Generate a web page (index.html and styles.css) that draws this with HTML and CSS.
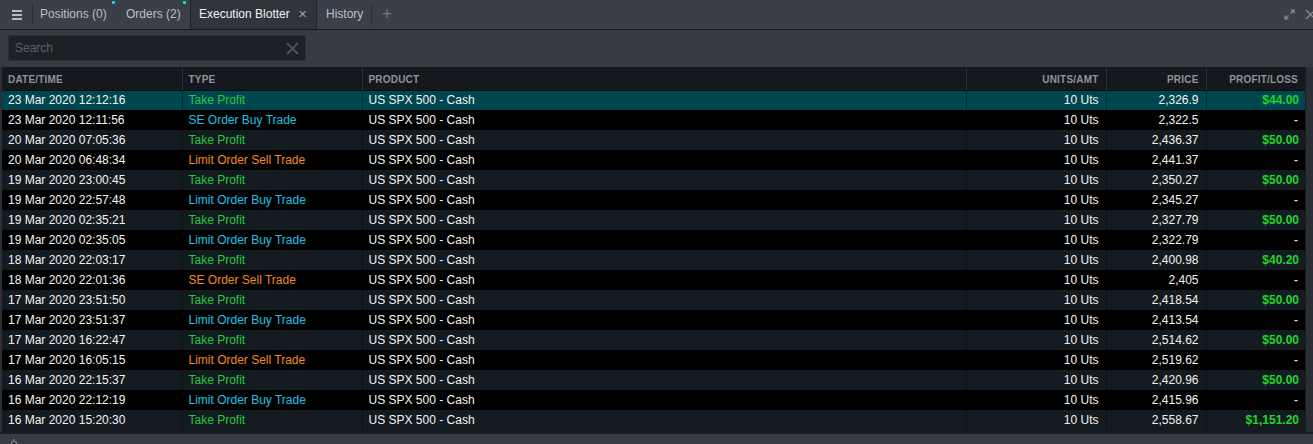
FILE: index.html
```html
<!DOCTYPE html>
<html>
<head>
<meta charset="utf-8">
<link rel="stylesheet" href="styles.css">
</head>
<body>
<div class="app">
  <div class="tabbar">
    <div class="menu">
      <span class="bar"></span><span class="bar"></span><span class="bar"></span>
    </div>
    <div class="tab tab-pos">Positions (0)<span class="mark mark-cyan"></span></div>
    <div class="tab tab-ord">Orders (2)<span class="mark mark-green"></span></div>
    <div class="tab active">Execution Blotter<span class="close">&#x2715;</span></div>
    <div class="tab tab-hist">History</div>
    <div class="add">+</div>
    <div class="spacer"></div>
    <div class="win-icons">
      <svg class="expand" width="11" height="11" viewBox="0 0 11 11">
        <path d="M6.5 1H10V4.5M10 1L6.5 4.5M4.5 10H1V6.5M1 10L4.5 6.5" fill="none" stroke="#8a9098" stroke-width="1.2"/>
      </svg>
      <svg class="xclose" width="11" height="11" viewBox="0 0 11 11">
        <path d="M1 1L10 10M10 1L1 10" fill="none" stroke="#8a9098" stroke-width="1.2"/>
      </svg>
    </div>
  </div>
  <div class="toolbar">
    <div class="search">
      <span class="placeholder">Search</span>
      <svg width="13" height="13" viewBox="0 0 13 13"><path d="M1 1L12 12M12 1L1 12" stroke="#4b5057" stroke-width="2" fill="none"/></svg>
    </div>
  </div>
  <div class="grid-wrap">
    <div class="grid">
      <table>
        <colgroup>
          <col class="c-date"><col class="c-type"><col class="c-prod"><col class="c-units"><col class="c-price"><col class="c-pl">
        </colgroup>
        <thead>
          <tr><th>DATE/TIME</th><th>TYPE</th><th>PRODUCT</th><th class="r">UNITS/AMT</th><th class="r">PRICE</th><th class="r">PROFIT/LOSS</th></tr>
        </thead>
        <tbody>
          <tr class="sel"><td>23 Mar 2020 12:12:16</td><td class="tp">Take Profit</td><td>US SPX 500 - Cash</td><td class="r">10 Uts</td><td class="r">2,326.9</td><td class="r pl">$44.00</td></tr>
          <tr><td>23 Mar 2020 12:11:56</td><td class="buy">SE Order Buy Trade</td><td>US SPX 500 - Cash</td><td class="r">10 Uts</td><td class="r">2,322.5</td><td class="r">-</td></tr>
          <tr><td>20 Mar 2020 07:05:36</td><td class="tp">Take Profit</td><td>US SPX 500 - Cash</td><td class="r">10 Uts</td><td class="r">2,436.37</td><td class="r pl">$50.00</td></tr>
          <tr><td>20 Mar 2020 06:48:34</td><td class="sell">Limit Order Sell Trade</td><td>US SPX 500 - Cash</td><td class="r">10 Uts</td><td class="r">2,441.37</td><td class="r">-</td></tr>
          <tr><td>19 Mar 2020 23:00:45</td><td class="tp">Take Profit</td><td>US SPX 500 - Cash</td><td class="r">10 Uts</td><td class="r">2,350.27</td><td class="r pl">$50.00</td></tr>
          <tr><td>19 Mar 2020 22:57:48</td><td class="buy">Limit Order Buy Trade</td><td>US SPX 500 - Cash</td><td class="r">10 Uts</td><td class="r">2,345.27</td><td class="r">-</td></tr>
          <tr><td>19 Mar 2020 02:35:21</td><td class="tp">Take Profit</td><td>US SPX 500 - Cash</td><td class="r">10 Uts</td><td class="r">2,327.79</td><td class="r pl">$50.00</td></tr>
          <tr><td>19 Mar 2020 02:35:05</td><td class="buy">Limit Order Buy Trade</td><td>US SPX 500 - Cash</td><td class="r">10 Uts</td><td class="r">2,322.79</td><td class="r">-</td></tr>
          <tr><td>18 Mar 2020 22:03:17</td><td class="tp">Take Profit</td><td>US SPX 500 - Cash</td><td class="r">10 Uts</td><td class="r">2,400.98</td><td class="r pl">$40.20</td></tr>
          <tr><td>18 Mar 2020 22:01:36</td><td class="sell">SE Order Sell Trade</td><td>US SPX 500 - Cash</td><td class="r">10 Uts</td><td class="r">2,405</td><td class="r">-</td></tr>
          <tr><td>17 Mar 2020 23:51:50</td><td class="tp">Take Profit</td><td>US SPX 500 - Cash</td><td class="r">10 Uts</td><td class="r">2,418.54</td><td class="r pl">$50.00</td></tr>
          <tr><td>17 Mar 2020 23:51:37</td><td class="buy">Limit Order Buy Trade</td><td>US SPX 500 - Cash</td><td class="r">10 Uts</td><td class="r">2,413.54</td><td class="r">-</td></tr>
          <tr><td>17 Mar 2020 16:22:47</td><td class="tp">Take Profit</td><td>US SPX 500 - Cash</td><td class="r">10 Uts</td><td class="r">2,514.62</td><td class="r pl">$50.00</td></tr>
          <tr><td>17 Mar 2020 16:05:15</td><td class="sell">Limit Order Sell Trade</td><td>US SPX 500 - Cash</td><td class="r">10 Uts</td><td class="r">2,519.62</td><td class="r">-</td></tr>
          <tr><td>16 Mar 2020 22:15:37</td><td class="tp">Take Profit</td><td>US SPX 500 - Cash</td><td class="r">10 Uts</td><td class="r">2,420.96</td><td class="r pl">$50.00</td></tr>
          <tr><td>16 Mar 2020 22:12:19</td><td class="buy">Limit Order Buy Trade</td><td>US SPX 500 - Cash</td><td class="r">10 Uts</td><td class="r">2,415.96</td><td class="r">-</td></tr>
          <tr><td>16 Mar 2020 15:20:30</td><td class="tp">Take Profit</td><td>US SPX 500 - Cash</td><td class="r">10 Uts</td><td class="r">2,558.67</td><td class="r pl">$1,151.20</td></tr>
        </tbody>
      </table>
    </div>
    <div class="vscroll"></div>
  </div>
  <div class="footer">
    <svg class="foot-icon" width="8" height="10" viewBox="0 0 8 10"><path d="M1.5 10V5.5Q1.5 3 4 3Q6.5 3 6.5 5.5V10" fill="none" stroke="#7d838b" stroke-width="1.2"/><path d="M4 1V3" stroke="#7d838b" stroke-width="1.2"/></svg>
  </div>
</div>
</body>
</html>
```
FILE: styles.css
```css
* { box-sizing: border-box; }
html, body { margin: 0; padding: 0; }
body {
  width: 1313px;
  height: 444px;
  overflow: hidden;
  background: #363b43;
  font-family: "Liberation Sans", Arial, sans-serif;
  font-size: 12px;
}
.app { display: flex; flex-direction: column; height: 444px; }

.tabbar {
  display: flex;
  align-items: stretch;
  height: 30px;
  background: #3b4048;
  border-bottom: 1px solid #16181b;
}
.menu {
  width: 33px;
  display: flex;
  flex-direction: column;
  justify-content: center;
  align-items: flex-start;
  padding-left: 12px;
  gap: 2px;
  position: relative;
}
.menu::after {
  content: "";
  position: absolute;
  right: 0;
  top: 4px;
  bottom: 5px;
  width: 1px;
  background: #2b2f35;
}
.bar { display: block; width: 10px; height: 2px; background: #b6bbc2; }
.tab {
  position: relative;
  display: flex;
  align-items: center;
  padding-bottom: 1px;
  color: #b9bfc7;
  font-size: 12px;
  white-space: nowrap;
}
.tab-pos { width: 82px; padding-left: 7px; }
.tab-ord { width: 75px; padding-left: 11px; }
.tab-hist { width: 54px; padding-left: 9px; }
.mark { position: absolute; top: 1px; width: 3px; height: 3px; }
.mark-cyan { background: #1fc6f0; right: 0; }
.mark-green { background: #19e07a; right: 4px; }
.tab.active {
  width: 127px;
  background: #30343b;
  color: #eef0f2;
  border-left: 1px solid #1f2226;
  border-right: 1px solid #1f2226;
  padding-left: 8px;
}
.close { margin-left: 8px; color: #9aa0a8; font-size: 11px; }
.add {
  display: flex;
  align-items: center;
  padding: 0 0 2px 10px;
  color: #737980;
  font-size: 17px;
  border-left: 1px solid #2b2f35;
  margin: 5px 0 4px 0;
}
.spacer { flex: 1; }
.win-icons { display: flex; align-items: center; gap: 10px; margin-right: -2px; }
.xclose { margin-right: -1px; }

.toolbar {
  height: 37px;
  padding: 5px 0 0 8px;
  background: #363b43;
}
.search {
  width: 298px;
  height: 26px;
  background: #1d2025;
  border: 1px solid #2a2d32;
  display: flex;
  align-items: center;
  justify-content: space-between;
  padding: 0 6px 0 6px;
}
.placeholder { color: #5b6068; font-size: 12px; }

.grid-wrap {
  display: flex;
  height: 365px;
  padding-left: 2px;
  background: #2c3036;
}
.grid { width: 1303px; background: #131a20; overflow: hidden; }
.vscroll { flex: 1; background: #2a2e35; border-left: 1px solid #1b1e22; }

table { border-collapse: collapse; table-layout: fixed; width: 1303px; }
.c-date { width: 180px; }
.c-type { width: 180px; }
.c-prod { width: 604px; }
.c-units { width: 140px; }
.c-price { width: 100px; }
.c-pl { width: 99px; }

th {
  height: 23px;
  background: #15181c;
  color: #8d949d;
  font-size: 10px;
  font-weight: bold;
  text-align: left;
  padding: 3px 6px 0 6px;
  border-left: 1px solid #2b2f34;
  border-bottom: 1px solid #0c0f12;
  letter-spacing: 0.2px;
}
th:first-child { border-left: none; }
td {
  height: 20px;
  padding: 0 6px;
  color: #f4f4f4;
  white-space: nowrap;
  border-left: 1px solid rgba(0,0,0,0.35);
}
td:first-child { border-left: none; }
.r { text-align: right; }
th.r { padding-right: 7px; }
td.r { padding-right: 7px; }
td.pl { padding-right: 6px; }
tbody tr:nth-child(odd) { background: #131b21; }
tbody tr:nth-child(even) { background: #000000; }
tbody tr.sel { background: #00464f; }
.tp { color: #27c93f; }
.buy { color: #1fc0e6; }
.sell { color: #f28a22; }
.pl { color: #22d42a; font-weight: bold; }

.footer {
  flex: 1;
  background: #373b43;
  border-top: 2px solid #1a1d21;
  padding: 4px 0 0 10px;
  overflow: hidden;
}
.foot-icon { display: block; }
```
